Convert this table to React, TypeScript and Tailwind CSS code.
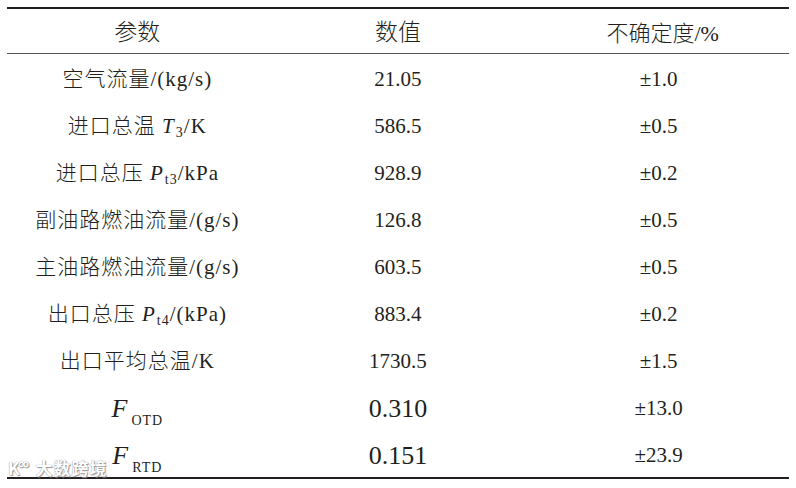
import React from 'react';

const FONT = "font-['Liberation_Serif','Noto_Sans_CJK_SC',serif]";

const Sub = ({ children }: { children: React.ReactNode }) => (
  <sub className="text-[14px] relative top-[4px] ml-[1px]">{children}</sub>
);

const rows: { label: React.ReactNode; value: string; err: string; big?: boolean }[] = [
  { label: <>空气流量/(kg/s)</>, value: '21.05', err: '±1.0' },
  {
    label: (
      <>
        进口总温 <i>T</i>
        <Sub>3</Sub>/K
      </>
    ),
    value: '586.5',
    err: '±0.5',
  },
  {
    label: (
      <>
        进口总压 <i>P</i>
        <Sub>t3</Sub>/kPa
      </>
    ),
    value: '928.9',
    err: '±0.2',
  },
  { label: <>副油路燃油流量/(g/s)</>, value: '126.8', err: '±0.5' },
  { label: <>主油路燃油流量/(g/s)</>, value: '603.5', err: '±0.5' },
  {
    label: (
      <>
        出口总压 <i>P</i>
        <Sub>t4</Sub>/(kPa)
      </>
    ),
    value: '883.4',
    err: '±0.2',
  },
  { label: <>出口平均总温/K</>, value: '1730.5', err: '±1.5' },
  {
    label: (
      <span className="text-[26px]">
        <i>F</i>
        <sub className="text-[14px] relative top-[8px] ml-[3px]">OTD</sub>
      </span>
    ),
    value: '0.310',
    err: '±13.0',
    big: true,
  },
  {
    label: (
      <span className="text-[26px]">
        <i>F</i>
        <sub className="text-[14px] relative top-[8px] ml-[3px]">RTD</sub>
      </span>
    ),
    value: '0.151',
    err: '±23.9',
    big: true,
  },
];

export default function App() {
  return (
    <div className={`w-[796px] h-[488px] bg-white relative text-[#231f20] font-light ${FONT}`}>
      <div className="pt-[7px] px-[7px]">
        {/* top rule */}
        <div className="h-[2px] bg-[#231f20]" />
        <div className="grid grid-cols-3 h-[45px] pt-[4px] items-center text-center text-[23px] border-b border-[#555]">
          <div>参数</div>
          <div>数值</div>
          <div className="text-[22px] pl-[8px]">不确定度/%</div>
        </div>
        {rows.map((r, i) => (
          <div key={i} className="grid grid-cols-3 h-[47px] pt-[4px] items-center text-center text-[21px] leading-none">
            <div className="tracking-[1px]">{r.label}</div>
            <div className={r.big ? 'text-[26px]' : ''}>{r.value}</div>
            <div>{r.err}</div>
          </div>
        ))}
        {/* bottom rule */}
        <div className="h-[2px] bg-[#231f20]" />
      </div>

      {/* watermark */}
      <div className="absolute left-[8px] top-[455px] flex items-center gap-[4px] text-white text-[17px] font-['Noto_Sans_CJK_SC',sans-serif] font-bold [text-shadow:0_0_1px_#777,1px_1px_1px_#999]">
        <span className="tracking-[-2px]">K°°</span>
        <span className="ml-[4px] tracking-[1px]">大数跨境</span>
      </div>
    </div>
  );
}
